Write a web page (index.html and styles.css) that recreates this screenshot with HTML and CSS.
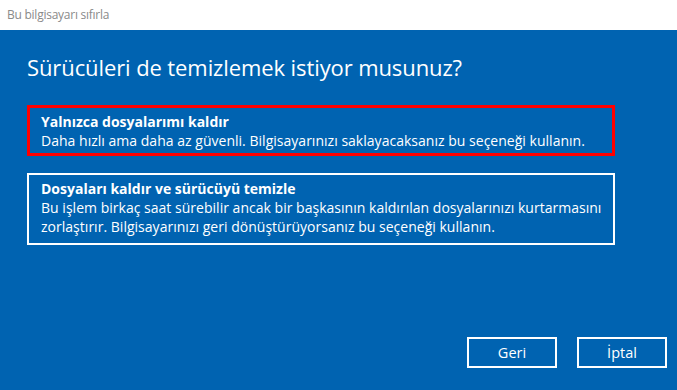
FILE: index.html
```html
<!DOCTYPE html>
<html lang="tr">
<head>
<meta charset="utf-8">
<title>Bu bilgisayarı sıfırla</title>
<link rel="stylesheet" href="styles.css">
</head>
<body>
<div class="window">
  <div class="titlebar">Bu bilgisayarı sıfırla</div>
  <div class="content">
    <h1 class="heading">Sürücüleri de temizlemek istiyor musunuz?</h1>
    <div class="options">
      <div class="option option-selected">
        <div class="option-title">Yalnızca dosyalarımı kaldır</div>
        <div class="option-desc">Daha hızlı ama daha az güvenli. Bilgisayarınızı saklayacaksanız bu seçeneği kullanın.</div>
      </div>
      <div class="option">
        <div class="option-title">Dosyaları kaldır ve sürücüyü temizle</div>
        <div class="option-desc">Bu işlem birkaç saat sürebilir ancak bir başkasının kaldırılan dosyalarınızı kurtarmasını<br>zorlaştırır. Bilgisayarınızı geri dönüştürüyorsanız bu seçeneği kullanın.</div>
      </div>
    </div>
    <div class="buttons">
      <button class="btn">Geri</button>
      <button class="btn">İptal</button>
    </div>
  </div>
</div>
</body>
</html>
```
FILE: styles.css
```css
html, body {
  margin: 0;
  padding: 0;
  width: 677px;
  height: 390px;
  overflow: hidden;
}
body {
  font-family: "Open Sans", "Noto Sans", sans-serif;
  background: #0063b1;
}
.window {
  display: flex;
  flex-direction: column;
  height: 390px;
}
.titlebar {
  height: 30px;
  box-sizing: border-box;
  background: #ffffff;
  color: #8a8a8a;
  font-size: 12px;
  line-height: 30px;
  padding-left: 7px;
  letter-spacing: -0.25px;
}
.content {
  flex: 1;
  display: flex;
  flex-direction: column;
  padding: 0 62px 22px 27px;
  color: #ffffff;
}
.heading {
  margin: 21px 0 0 0;
  font-size: 22px;
  line-height: 32px;
  font-weight: 400;
  letter-spacing: -0.1px;
}
.options {
  display: flex;
  flex-direction: column;
  gap: 17px;
  margin-top: 22px;
}
.option {
  border: 2px solid #ffffff;
  padding: 4px 2px 7px 12px;
  font-size: 14px;
  line-height: 19px;
  letter-spacing: 0;
}
.option-selected {
  border: 3px solid #ff0000;
  padding: 4px 1px 3px 11px;
}
.option-desc {
  letter-spacing: 0.02px;
}
.option-title {
  font-weight: 700;
}
.buttons {
  margin-top: auto;
  display: flex;
  justify-content: flex-end;
  gap: 20px;
  margin-right: -52px;
}
.btn {
  width: 90px;
  height: 31px;
  border: 2px solid #ffffff;
  background: transparent;
  color: #ffffff;
  font-family: "Open Sans", "Noto Sans", sans-serif;
  font-size: 14.5px;
  padding: 0;
}
```
